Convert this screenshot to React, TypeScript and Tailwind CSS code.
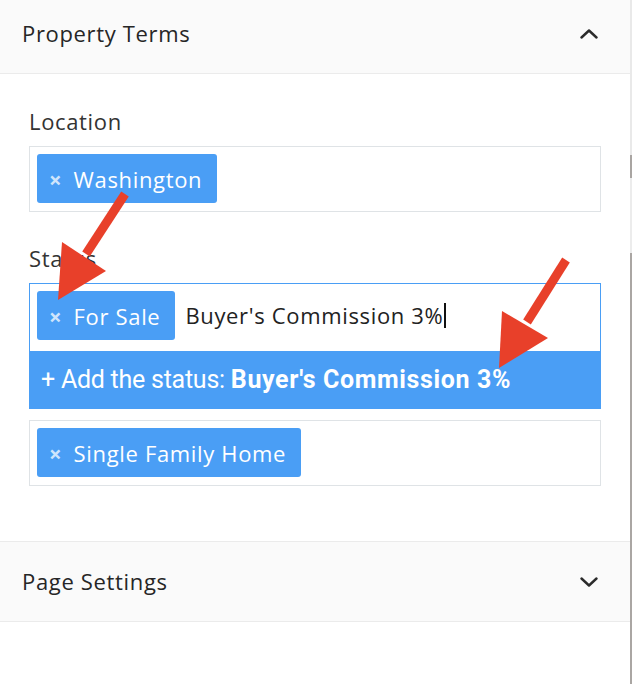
const tagBlue = "bg-[#4a9ef5]"

function Tag({ label }: { label: string }) {
  return (
    <span className={`flex h-[49px] items-center gap-[12px] rounded-[3px] ${tagBlue} pl-[12px] pr-[15px] text-white`}>
      <span className="text-[22px] font-bold leading-none text-[#cfe5fc]">×</span>
      <span className="pt-[2px] text-[22px] tracking-[0.03em]">{label}</span>
    </span>
  )
}

function Chevron({ up }: { up?: boolean }) {
  return (
    <svg width="18" height="10" viewBox="0 0 18 10" fill="none">
      <polyline
        points={up ? "1.5,8.5 9,1.5 16.5,8.5" : "1.5,1.5 9,8.5 16.5,1.5"}
        stroke="#2b2b2b"
        strokeWidth="2.4"
        strokeLinecap="round"
        strokeLinejoin="round"
      />
    </svg>
  )
}

function SectionHeader({ title, up, className }: { title: string; up?: boolean; className: string }) {
  return (
    <div className={`flex items-center justify-between bg-[#fafafa] pl-[22px] pr-[32px] ${className}`}>
      <h2 className="text-[22px] text-[#262626] tracking-[0.03em]">{title}</h2>
      <Chevron up={up} />
    </div>
  )
}

export default function App() {
  return (
    <div className="flex h-[684px] w-[632px] overflow-hidden bg-white font-['Open_Sans',sans-serif]">
      <div className="relative flex-1">
        <SectionHeader title="Property Terms" up className="h-[74px] border-b border-[#ebebeb] pb-[6px]" />

        <div className="px-[29px] pt-[34px] pb-[55px]">
          <label className="block text-[22px] leading-[26px] text-[#333] tracking-[0.03em]">Location</label>
          <div className="mt-[12px] flex h-[66px] items-start border border-[#dfe3e6] p-[7px]">
            <Tag label="Washington" />
          </div>

          <label className="mt-[33px] block text-[22px] leading-[26px] text-[#333] tracking-[0.03em]">Status</label>
          <div className="mt-[12px] flex h-[68px] items-start gap-[10px] border border-b-0 border-[#4a9ef5] p-[7px]">
            <Tag label="For Sale" />
            <span className="flex h-[49px] items-center text-[22px] text-[#222] tracking-[0.03em]">
              Buyer's Commission 3%
              <span className="ml-[1px] h-[25px] w-[2px] bg-[#111]" />
            </span>
          </div>
          <div className="flex h-[58px] items-center bg-[#4a9ef5] pl-[12px] font-['Roboto',sans-serif] text-[25px] tracking-[-0.01em] text-white">
            + Add the status:&nbsp;<strong className="font-bold tracking-[0.025em]">Buyer's Commission 3%</strong>
          </div>

          <div className="mt-[11px] flex h-[66px] items-start border border-[#dfe3e6] p-[7px]">
            <Tag label="Single Family Home" />
          </div>
        </div>

        <SectionHeader title="Page Settings" className="h-[81px] border-y border-[#ebebeb]" />

        {/* annotation arrows */}
        <svg className="pointer-events-none absolute inset-0" width="630" height="684">
          <line x1="125" y1="194" x2="86" y2="254" stroke="#e8402a" strokeWidth="9" />
          <polygon points="58,300 62,242 106,271" fill="#e8402a" />
          <line x1="566" y1="260" x2="527" y2="322" stroke="#e8402a" strokeWidth="9" />
          <polygon points="499,368 502,311 548,338" fill="#e8402a" />
        </svg>
      </div>

      {/* scrollbar strip */}
      <div className="flex w-[2px] flex-col">
        <div className="h-[155px] bg-[#e9e9e9]" />
        <div className="h-[23px] bg-[#a9a5a2]" />
        <div className="h-[75px] bg-[#ececec]" />
        <div className="flex-1 bg-[#aaa6a3]" />
      </div>
    </div>
  )
}
